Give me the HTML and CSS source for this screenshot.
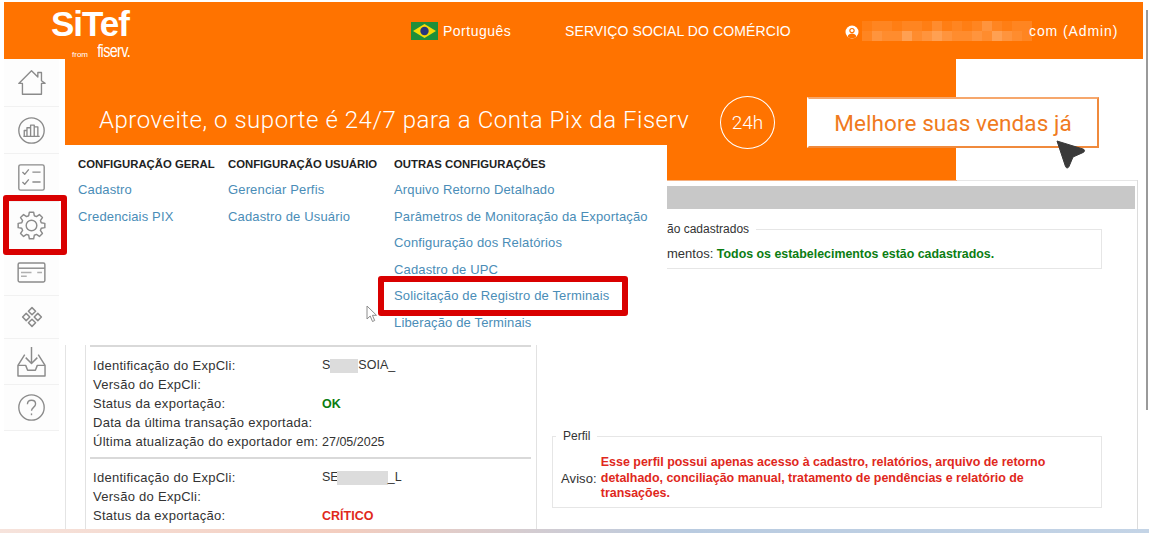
FILE: index.html
```html
<!DOCTYPE html>
<html lang="pt-BR">
<head>
    <meta charset="UTF-8">
    <meta name="viewport" content="width=device-width, initial-scale=1.0">
    <title>SiTef</title>
    <link rel="stylesheet" href="styles.css">
</head>
<body>
    <div class="screen">
        <div class="window">
            <header class="topbar">
                <div class="logo">
                    <div class="logo-name">SiTef</div>
                    <div class="logo-sub"><span class="logo-from">from</span> <span class="logo-fiserv">fiserv.</span></div>
                </div>
                <div class="lang">
                    <svg class="flag" viewBox="0 0 27 18">
                        <rect width="27" height="18" fill="#1f8f3a"/>
                        <polygon points="13.5,2 25,9 13.5,16 2,9" fill="#f5d90a"/>
                        <circle cx="13.5" cy="9" r="4.2" fill="#27357e"/>
                    </svg>
                    <span>Português</span>
                </div>
                <div class="org">SERVIÇO SOCIAL DO COMÉRCIO</div>
                <div class="user">
                    <svg class="user-icon" viewBox="0 0 14 14">
                        <circle cx="7" cy="7" r="6.5" fill="#fff"/>
                        <circle cx="7" cy="5.6" r="2.7" fill="#ff7300"/>
                        <path d="M2.6 11.4c.8-2.2 2.5-3 4.4-3s3.600.8 4.400 3a6 6 0 0 1-8.800 0z" fill="#ff7300"/>
                        <circle cx="7" cy="5.6" r="1.500" fill="#fff"/>
                    </svg>
                    <div class="mosaic">
                        <span class="t1"></span><span class="t2"></span><span class="t2"></span><span class="t1"></span><span class="t2"></span><span class="t2"></span><span class="t1"></span><span class="t3"></span><span class="t1"></span><span class="t2"></span><span class="t1"></span><span class="t2"></span><span class="t4"></span><span class="t2"></span><span class="t1"></span><span class="t2"></span><span class="t2"></span>
                        <span class="t2"></span><span class="t4"></span><span class="t3"></span><span class="t3"></span><span class="t5"></span><span class="t3"></span><span class="t4"></span><span class="t5"></span><span class="t4"></span><span class="t3"></span><span class="t3"></span><span class="t4"></span><span class="t3"></span><span class="t5"></span><span class="t4"></span><span class="t3"></span><span class="t2"></span>
                    </div>
                    <span class="user-name">com (Admin)</span>
                </div>
            </header>

            <div class="layout">
                <nav class="sidebar">
                    <a class="side-item">
                        <svg class="icon" viewBox="0 0 32 32"><path d="M2 17 16 3l7 7V5h4v9l4 3h-4v12H6V17z"/></svg>
                    </a>
                    <a class="side-item">
                        <svg class="icon" viewBox="0 0 32 32">
                            <circle cx="16" cy="16" r="14"/>
                            <path d="M8 22v-6h3v6M11 22V13h4v9M15 22V10h4v12M19 22v-10h4v10M7 22.500h18"/>
                        </svg>
                    </a>
                    <a class="side-item">
                        <svg class="icon" viewBox="0 0 32 32">
                            <rect x="2" y="2" width="28" height="28" rx="2"/>
                            <path d="M6 10l2.500 2.500L13 7M6 21l2.500 2.500L13 18M17 10h9M17 21h9"/>
                        </svg>
                    </a>
                    <a class="side-item">
                        <svg class="icon" viewBox="0 0 30 30">
                            <path d="M12.100 4.900 12.800 1.200H17.200L17.900 4.900 20.100 5.800 23.200 3.700 26.300 6.800 24.200 9.900 25.100 12.100 28.800 12.800V17.200L25.100 17.900 24.200 20.100 26.300 23.200 23.200 26.300 20.100 24.200 17.900 25.100 17.200 28.800H12.800L12.100 25.100 9.900 24.200 6.800 26.300 3.700 23.200 5.800 20.100 4.900 17.900 1.200 17.200V12.800L4.900 12.100 5.800 9.900 3.700 6.800 6.800 3.700 9.900 5.800Z"/>
                            <circle cx="15" cy="15" r="5.500"/>
                        </svg>
                    </a>
                    <a class="side-item">
                        <svg class="icon icon-card" viewBox="0 0 30 22">
                            <rect x="1" y="1" width="28" height="20" rx="1.500"/>
                            <path d="M1 6.500h28"/>
                            <path class="thick" d="M4 11h11M4 15h6M21 11h5"/>
                        </svg>
                    </a>
                    <a class="side-item">
                        <svg class="icon icon-small" viewBox="0 0 22 22">
                            <path d="M11 1.600 14.600 5.200 11 8.800 7.400 5.200ZM5.200 7.400 8.800 11 5.200 14.600 1.600 11ZM16.800 7.400 20.400 11 16.800 14.600 13.200 11ZM11 13.200 14.600 16.800 11 20.400 7.400 16.800Z"/>
                        </svg>
                    </a>
                    <a class="side-item">
                        <svg class="icon icon-tall" viewBox="0 0 30 32">
                            <path d="M15 1v17M9 12l6 6 6-6"/>
                            <path d="M8 9 1 20v11h28V20L22 9"/>
                            <path d="M1 20h8l2 5h8l2-5h8"/>
                        </svg>
                    </a>
                    <a class="side-item">
                        <svg class="icon" viewBox="0 0 32 32">
                            <circle cx="16" cy="16" r="14"/>
                            <path d="M11.500 12.500c0-2.800 2-4.500 4.500-4.500s4.500 1.700 4.500 4.200c0 3.600-4.500 3.700-4.500 7.300"/>
                            <path d="M16 22.500v2"/>
                        </svg>
                    </a>
                </nav>

                <main class="main">
                    <section class="banner">
                        <div class="banner-text">Aproveite, o suporte é 24/7 para a Conta Pix da Fiserv</div>
                        <div class="banner-badge">24h</div>
                        <div class="banner-cta">
                            Melhore suas vendas já
                            <svg class="cta-pointer" viewBox="0 0 32 32">
                                <path d="M3 3 29 11c2 .6 2 2.600.3 3.400L19 19l-4 9.500c-.8 2-3 1.800-3.600-.3Z" fill="#3a3a3a" stroke="#3a3a3a" stroke-linejoin="round"/>
                            </svg>
                        </div>
                    </section>

                    <div class="content">
                        <div class="grey-bar"></div>
                        <div class="columns">
                            <div class="exporters">
                                <div class="exporter">
                                    <div class="label">Identificação do ExpCli:</div>
                                    <div class="value">S<span class="mask mask-a"></span>SOIA_</div>
                                    <div class="label">Versão do ExpCli:</div>
                                    <div></div>
                                    <div class="label">Status da exportação:</div>
                                    <div class="value ok">OK</div>
                                    <div class="label">Data da última transação exportada:</div>
                                    <div></div>
                                    <div class="label">Última atualização do exportador em:</div>
                                    <div class="value">27/05/2025</div>
                                </div>
                                <div class="exporter">
                                    <div class="label">Identificação do ExpCli:</div>
                                    <div class="value">SE<span class="mask mask-b"></span>_L</div>
                                    <div class="label">Versão do ExpCli:</div>
                                    <div></div>
                                    <div class="label">Status da exportação:</div>
                                    <div class="value critical">CRÍTICO</div>
                                </div>
                            </div>
                            <div class="notices">
                                <fieldset class="notice notice-first">
                                    <legend>ão cadastrados</legend>
                                    <div class="notice-line">mentos: <span class="ok">Todos os estabelecimentos estão cadastrados.</span></div>
                                </fieldset>
                                <fieldset class="notice notice-profile">
                                    <legend>Perfil</legend>
                                    <div class="notice-row">
                                        <span>Aviso:</span>
                                        <span class="warn">Esse perfil possui apenas acesso à cadastro, relatórios, arquivo de retorno detalhado, conciliação manual, tratamento de pendências e relatório de transações.</span>
                                    </div>
                                </fieldset>
                            </div>
                        </div>
                    </div>
                </main>
            </div>
        </div>
        <div class="scrollbar"></div>
        <div class="taskbar"></div>

        <div class="menu">
            <div class="menu-col menu-col-general">
                <h4>CONFIGURAÇÃO GERAL</h4>
                <a>Cadastro</a>
                <a>Credenciais PIX</a>
            </div>
            <div class="menu-col menu-col-user">
                <h4>CONFIGURAÇÃO USUÁRIO</h4>
                <a>Gerenciar Perfis</a>
                <a>Cadastro de Usuário</a>
            </div>
            <div class="menu-col">
                <h4>OUTRAS CONFIGURAÇÕES</h4>
                <a>Arquivo Retorno Detalhado</a>
                <a>Parâmetros de Monitoração da Exportação</a>
                <a>Configuração dos Relatórios</a>
                <a>Cadastro de UPC</a>
                <a>Solicitação de Registro de Terminais</a>
                <a>Liberação de Terminais</a>
            </div>
        </div>

        <svg class="mouse" viewBox="0 0 12 18">
            <path d="M1 1v13l3.200-3 2.300 5.500 2.200-1-2.300-5.200H10.500Z" fill="#fff" stroke="#8c8c8c"/>
        </svg>
        <div class="mark mark-gear"></div>
        <div class="mark mark-link"></div>
    </div>
</body>
</html>
```

FILE: styles.css
```css
* {
    box-sizing: border-box;
}
body {
    margin: 0;
    font-family: "Liberation Sans", Arial, sans-serif;
    font-size: 13px;
    color: #333;
    background: #fff;
}
.screen {
    position: relative;
    width: 1149px;
    height: 533px;
    overflow: hidden;
    display: flex;
    flex-direction: column;
    padding: 2px 0 0 4px;
}
.window {
    flex: 1;
    min-height: 0;
    width: 1139px;
    overflow: hidden;
}
.taskbar {
    height: 4px;
    margin-left: -4px;
    background: linear-gradient(to right, #f6e3dc 0, #f3cdbf 30%, #b9cbe0 60%, #c4d4e6 100%);
}
.scrollbar {
    position: absolute;
    top: 10px;
    right: 1px;
    width: 2px;
    height: 400px;
    background: #9a9a9a;
}

/* top bar */
.topbar {
    display: flex;
    align-items: center;
    height: 57px;
    padding-left: 47px;
    background: #ff7300;
    color: #fff;
    font-size: 14px;
}
.logo {
    width: 360px;
    height: 57px;
    padding-top: 5px;
}
.logo-name {
    height: 34px;
    font-size: 35px;
    line-height: 34px;
    font-weight: bold;
    letter-spacing: -1px;
}
.logo-sub {
    margin-top: 3px;
    width: 79px;
    text-align: right;
    line-height: 15px;
}
.logo-from {
    font-size: 8px;
}
.logo-fiserv {
    display: inline-block;
    font-size: 18px;
    letter-spacing: -0.8px;
    transform: scaleX(0.8);
    transform-origin: right;
    margin-left: -3px;
}
.lang {
    display: flex;
    align-items: center;
    gap: 5px;
    width: 154px;
    letter-spacing: 0.5px;
}
.flag {
    width: 27px;
    height: 18px;
}
.org {
    width: 280px;
    letter-spacing: 0.1px;
}
.user {
    display: flex;
    align-items: center;
}
.user-icon {
    width: 14px;
    height: 14px;
    margin-top: 3px;
}
.user-name {
    margin-left: -2px;
    letter-spacing: 0.9px;
}
.mosaic {
    display: grid;
    grid-template-columns: repeat(17, 10px);
    grid-auto-rows: 10px;
    width: 170px;
    margin: 0 -1px 0 3px;
}
.t1 { background: rgba(255, 255, 255, 0.08); }
.t2 { background: rgba(255, 255, 255, 0.13); }
.t3 { background: rgba(255, 255, 255, 0.18); }
.t4 { background: rgba(255, 255, 255, 0.24); }
.t5 { background: rgba(255, 255, 255, 0.32); }

/* left nav */
.layout {
    display: flex;
    align-items: flex-start;
}
.sidebar {
    width: 55px;
    display: grid;
    grid-template-rows: 48px 47px 48px 48px 46px 43px 46px 46px;
    background: #fdfdfd;
}
.side-item {
    display: flex;
    align-items: center;
    justify-content: center;
    border-bottom: 1px solid #f1f1f1;
}
.icon {
    width: 29px;
    height: 29px;
    fill: none;
    stroke: #8b8b8b;
    stroke-width: 1.500;
    stroke-linejoin: round;
}
.icon-card {
    height: 21px;
}
.icon-small {
    width: 22px;
    height: 22px;
}
.icon-tall {
    height: 31px;
}
.thick {
    stroke: #b0b0b0;
}

/* main area */
.main {
    width: 1078px;
    margin-left: 6px;
}
.banner {
    display: flex;
    align-items: center;
    height: 121px;
    padding: 6px 0 0 34px;
    background: linear-gradient(to right, #ff7300 891px, #fff 891px);
    color: #fff;
}
.banner-text {
    width: 621px;
    margin-bottom: 6px;
    font-family: Roboto, "Liberation Sans", sans-serif;
    font-weight: 300;
    font-size: 24px;
    letter-spacing: 0.53px;
}
.banner-badge {
    display: flex;
    align-items: center;
    justify-content: center;
    width: 55px;
    height: 53px;
    border: 1px solid #fff;
    border-radius: 50%;
    font-family: Roboto, "Liberation Sans", sans-serif;
    font-size: 19px;
    font-weight: 300;
}
.banner-cta {
    position: relative;
    display: flex;
    align-items: center;
    justify-content: center;
    width: 292px;
    height: 51px;
    margin-left: 32px;
    background: #fff;
    border: 2px solid #fff;
    border-right-color: #f08a3c;
    border-bottom-color: #f08a3c;
    border-top-color: #f6a76c;
    color: #f07a20;
    font-family: Roboto, "Liberation Sans", sans-serif;
    font-size: 22.500px;
    letter-spacing: 0.1px;
}
.cta-pointer {
    position: absolute;
    top: 39px;
    left: 245px;
    width: 32px;
    height: 32px;
}
.content {
    height: 349px;
    border-left: 1px solid #e4e4e4;
    border-right: 1px solid #dcdcdc;
    width: 1073px;
    padding-top: 6px;
    background: linear-gradient(to right, #f5b080 891px, #e6e6e6 891px) no-repeat top / 100% 1px;
}
.grey-bar {
    height: 23px;
    margin: 0 2px 0 9px;
    background: #c8c8c8;
}
.columns {
    display: flex;
    gap: 15px;
    padding-left: 19px;
}
.exporters {
    width: 452px;
    height: 330px;
    padding: 136px 5px 0 4px;
    border-left: 1px solid #e2e2e2;
    border-right: 1px solid #e2e2e2;
}
.exporter {
    display: grid;
    grid-template-columns: 229px 1fr;
    grid-auto-rows: 19px;
    align-items: center;
    padding: 9px 0 6px 3px;
    border-top: 2px solid #d9d9d9;
}
.label {
    letter-spacing: 0.28px;
    white-space: nowrap;
}
.value {
    font-size: 12.5px;
}
.mask {
    display: inline-block;
    vertical-align: middle;
    height: 14px;
    background: #dcdcdc;
}
.mask-a {
    width: 28px;
}
.mask-b {
    width: 51px;
    margin-left: -2px;
}
.ok {
    color: #0b7d12;
    font-weight: bold;
}
.critical {
    color: #e0281c;
    font-weight: bold;
}
.notices {
    width: 550px;
}
.notice {
    margin: 0;
    padding: 0 8px;
    border: 1px solid #e6e6e6;
    min-inline-size: 0;
}
.notice legend {
    padding: 0 7px;
    font-size: 12px;
    line-height: 14px;
}
.notice-first {
    height: 47px;
    margin-top: 13px;
}
.notice-first legend {
    margin-left: 99px;
}
.notice-profile legend {
    margin-left: -5px;
}
.notice-line {
    padding: 10px 0 0 106px;
}
.notice-line .ok {
    font-size: 12.4px;
}
.notice-profile {
    height: 79px;
    margin-top: 160px;
}
.notice-row {
    display: flex;
    align-items: center;
    gap: 4px;
    padding: 12px 10px 0 0;
    letter-spacing: 0.1px;
}
.warn {
    flex: 1;
    color: #e0281c;
    font-size: 12.44px;
    font-weight: bold;
    line-height: 15.700px;
    letter-spacing: 0;
}

/* config menu */
.menu {
    position: absolute;
    top: 145px;
    left: 65px;
    display: flex;
    width: 602px;
    height: 200px;
    padding: 11px 0 0 13px;
    background: #fff;
}
.menu-col {
    display: flex;
    flex-direction: column;
}
.menu-col-general {
    width: 150px;
}
.menu-col-user {
    width: 166px;
}
.menu-col h4 {
    margin: 1px 0 5px;
    font-size: 11.33px;
    line-height: 15px;
    color: #222;
}
.menu-col a {
    height: 26.500px;
    line-height: 26.500px;
    color: #4a8db7;
    font-size: 13px;
    letter-spacing: 0.15px;
    white-space: nowrap;
}

/* annotations on the screenshot */
.mark {
    position: absolute;
    border: 6px solid #d90000;
    border-radius: 3px;
}
.mark-gear {
    top: 195px;
    left: 3px;
    width: 64px;
    height: 60px;
}
.mark-link {
    top: 276px;
    left: 378px;
    width: 250px;
    height: 40px;
}
.mouse {
    position: absolute;
    top: 305px;
    left: 366px;
    width: 12px;
    height: 18px;
}
```
